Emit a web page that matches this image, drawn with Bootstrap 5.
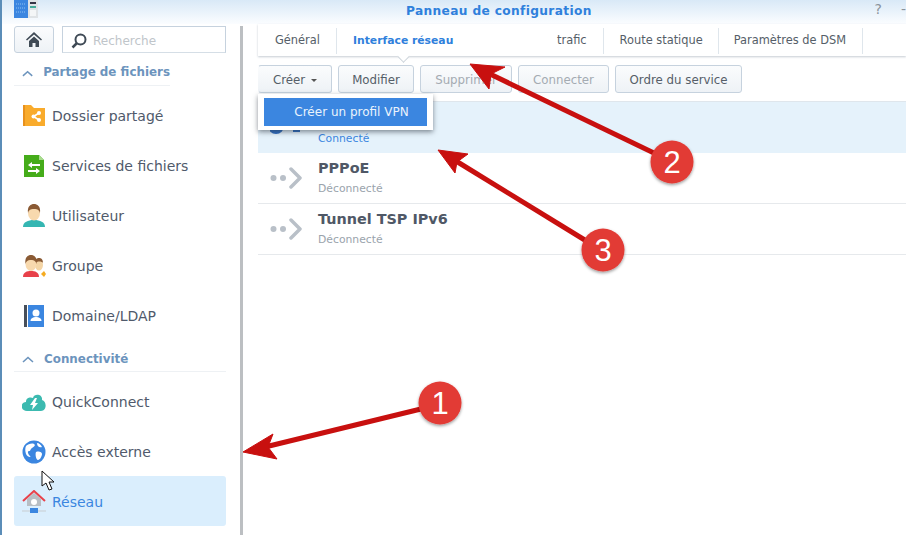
<!DOCTYPE html>
<html lang="fr">
<head>
  <meta charset="UTF-8" />
  <title>Panneau de configuration</title>
  <link href="https://cdn.jsdelivr.net/npm/bootstrap@5.3.3/dist/css/bootstrap.min.css" rel="stylesheet">
  <style>
    html,body { height:100%; overflow:hidden }
    body { background:#fff; color:#4a5568; font-family:"DejaVu Sans",Verdana,sans-serif; font-size:14px; position:relative; width:906px; height:535px; border-left:2px solid #5b8db8 }
    .titlebar { height:24px; background:linear-gradient(#d9e9f7,#fbfdff); position:relative; flex:none }
    .titletext { color:#2f80dc; font-weight:700; font-size:12.2px; letter-spacing:.35px; padding-left:404px; line-height:22px }
    .appico { position:absolute; left:12px; top:0 }
    .winbtns { position:absolute; right:0; top:0; color:#8a939c; font-size:14px; line-height:18px; gap:19px }
    .shell { height:511px }
    .sidebar { width:241px; flex:none; padding:2px 17px 0 12px; position:relative }
    .scrolltrack { position:absolute; right:0; top:2px; bottom:0; width:3px; background:#bcbfc2 }
    .homebtn { width:40px; height:27px; border:1px solid #c6d2de; border-radius:3px; background:linear-gradient(#fbfcfd,#eef2f6) }
    .searchbox { width:164px; height:27px; border:1px solid #c6d2de; border-bottom-color:#d5dee6; margin-left:8px; color:#c0c5ca; font-size:12px; gap:6px; padding:3px 0 0 8px }
    .sechead { color:#6c94bd; font-weight:700; font-size:11.9px; height:31px; gap:10px; padding:7px 0 0 8px; border-bottom:1px solid #eef1f4; margin-bottom:5px; white-space:nowrap }
    .sechead.first { width:156px; height:33px; padding-top:8px }
    .navitem { height:50px; gap:6px; font-size:14px; color:#505a6b; padding-left:8px; border-radius:3px }
    .navitem.tighter { height:49px; padding-top:1px }
    .navitem.current { background:#daeefd; color:#3b86e0; padding-top:2px }
    .navico { width:24px; height:24px; flex:none }
    .mainpane { flex:1; min-width:0; padding-left:15px }
    .tabstrip { height:32px; padding-top:2px; background:#fff; box-shadow:0 1px 2px rgba(90,110,130,.35); font-size:11.4px; color:#555e68; position:relative }
    .tabcell { height:26px; padding:0 16px; border-right:1px solid #dfe6ec; display:flex; align-items:center }
    .tabcell.tabfirst { width:79px; padding-left:17px; padding-right:0 }
    .tabcell.active { color:#2f80dc; font-weight:700; font-size:10.8px; border-right:0; width:220px }
    .tabcell.route { padding-right:15px }
    .tabcell.dsm { padding-left:15px }
    .notch { position:absolute; left:141px; top:28px; width:9px; height:9px; background:#fff; transform:rotate(45deg); border-right:1px solid #ccd3da; border-bottom:1px solid #ccd3da }
    .toolrow { height:46px; padding-top:9px; gap:6px; border-bottom:1px solid #dfe6ec }
    .toolbtn { height:28px; border:1px solid #c6d2de; border-radius:3px; background:linear-gradient(#fbfcfd,#eef2f6); font-size:11.8px; color:#555e68; padding:3px 0 0; display:flex; align-items:center; justify-content:center }
    .toolbtn.off { color:#a4abb2 }
    .b-create { width:74px; border-left-color:transparent }
    .b-edit { width:76px }
    .b-del { width:92px }
    .b-link { width:91px }
    .b-order { width:127px }
    .caretmini { display:inline-block; border-top:3px solid #555; border-left:3px solid transparent; border-right:3px solid transparent; margin-left:6px }
    .netrow { height:51px; border-bottom:1px solid #e6e9ec; padding-left:12px; gap:16px }
    .netrow.picked { background:#e5f2fb; border-bottom:0 }
    .netname { font-weight:700; font-size:14.4px; color:#4f5866; line-height:17px }
    .netstate { font-size:10.8px; color:#9aa3ac; line-height:14px; margin-top:5px }
    .netstate.on { color:#3b86e0 }
    .vpnmenu { position:absolute; left:256px; top:94px; width:175px; height:36px; background:#fff; box-shadow:0 2px 5px rgba(40,50,60,.55); padding:4px 6px; z-index:3 }
    .vpnitem { height:28px; background:#3b86e0; color:#eaf3fc; font-size:12px; display:flex; align-items:center; justify-content:center; padding-left:12px }
    .overlayart { position:absolute; left:-2px; top:0; z-index:5; pointer-events:none }
    .numtxt { font-family:"Liberation Sans",Arial,sans-serif; font-size:31px; fill:#fff; text-anchor:middle }
  </style>
</head>
<body>
<div class="titlebar">
  <svg class="appico" width="24" height="19" viewBox="0 0 24 19"><rect x="0" y="0" width="14" height="18" fill="#3b86e0"/><rect x="14" y="0" width="10" height="18" fill="#dfe3e6"/><rect x="16" y="2" width="6" height="2" fill="#334"/><rect x="16" y="6" width="6" height="2" fill="#4a9"/><rect x="16" y="10" width="6" height="6" fill="#f4f6f7"/><path d="M2 4h10M2 8h10M2 12h10" stroke="#8fc0f2" stroke-dasharray="1 1"/></svg>
  <div class="titletext">Panneau de configuration</div>
  <div class="winbtns d-flex"><span>?</span><span>-</span></div>
</div>
<div class="shell d-flex">
  <aside class="sidebar">
    <div class="scrolltrack"></div>
    <div class="d-flex">
      <div class="homebtn d-flex align-items-center justify-content-center">
        <svg width="16" height="15" viewBox="0 0 16 15"><path d="M8 0 0 7.500l1 1L8 2.400l7 6.100 1-1z" fill="#3f4a55"/><path d="M3 9 8 4.500 13 9v6H9.500v-4h-3v4H3z" fill="#3f4a55"/></svg>
      </div>
      <div class="searchbox d-flex align-items-center">
        <svg width="16" height="16" viewBox="0 0 16 16"><circle cx="9.500" cy="6.500" r="5" fill="none" stroke="#3f4a55" stroke-width="2"/><path d="M6 10 1.500 14.500" stroke="#3f4a55" stroke-width="2.500"/></svg>
        <span>Recherche</span>
      </div>
    </div>
    <div class="sechead first d-flex align-items-center">
      <svg width="12" height="7" viewBox="0 0 12 7"><path d="M1 6 6 1.500 11 6" fill="none" stroke="#6c94bd" stroke-width="1.600"/></svg>
      <span>Partage de fichiers</span>
    </div>
    <div class="navitem d-flex align-items-center">
      <svg class="navico" viewBox="0 0 24 24"><path d="M1 1h8l3 3h11v18H1z" fill="#f9ab2c"/><rect x="1" y="1" width="2" height="21" fill="#e8911c"/><path d="M17 9 11.500 12.500 17 16" fill="none" stroke="#fff" stroke-width="1.500"/><circle cx="17" cy="9" r="2" fill="#fff"/><circle cx="11.500" cy="12.500" r="2" fill="#fff"/><circle cx="17" cy="16" r="2" fill="#fff"/></svg>
      <span>Dossier partagé</span>
    </div>
    <div class="navitem d-flex align-items-center">
      <svg class="navico" viewBox="0 0 24 24"><path d="M2 1h15l5 5v17H2z" fill="#45ac1a"/><path d="M17 1v5h5z" fill="#a9dc8f"/><path d="M6 11l4-3v2h8v2h-8v2zM18 17l-4-3v2H6v2h8v2z" fill="#fff"/></svg>
      <span>Services de fichiers</span>
    </div>
    <div class="navitem d-flex align-items-center">
      <svg class="navico" viewBox="0 0 24 24"><path d="M1 23c0-5 5-7 11-7s11 2 11 7z" fill="#35b6b2"/><ellipse cx="12" cy="9" rx="6" ry="7.500" fill="#f8d9ae"/><path d="M6 9C5 2 9 0 12 0s7 2 6 9c-1-3-2-4-6-4S7 6 6 9z" fill="#8a5a34"/></svg>
      <span>Utilisateur</span>
    </div>
    <div class="navitem d-flex align-items-center">
      <svg class="navico" viewBox="0 0 24 24"><ellipse cx="17" cy="11" rx="4" ry="5.500" fill="#f4d5a6"/><path d="M13 9c0-4 2-5 4-5s4 1 4 5c-1-2-6-2-8 0z" fill="#8a5a34"/><path d="M19 20l3-3 2 3-2 3z" fill="#f5ab20"/><path d="M1 23c0-5 4-6 8-6s8 1 8 6z" fill="#e8414a"/><ellipse cx="9" cy="10" rx="5.500" ry="7" fill="#f8d9ae"/><path d="M3.500 10C2.500 3 6 1 9 1s6.500 2 5.500 9c-1-3-2-4-5.500-4S4.500 7 3.500 10z" fill="#8a5a34"/></svg>
      <span>Groupe</span>
    </div>
    <div class="navitem d-flex align-items-center">
      <svg class="navico" viewBox="0 0 24 24"><rect x="2" y="1" width="3" height="22" fill="#474f5a"/><rect x="6" y="1" width="16" height="22" fill="#3b86e0"/><circle cx="14" cy="9" r="3.500" fill="#fff"/><path d="M8.500 17c0-3 3-4 5.500-4s5.500 1 5.500 4z" fill="#fff"/></svg>
      <span>Domaine/LDAP</span>
    </div>
    <div class="sechead d-flex align-items-center">
      <svg width="12" height="7" viewBox="0 0 12 7"><path d="M1 6 6 1.500 11 6" fill="none" stroke="#6c94bd" stroke-width="1.600"/></svg>
      <span>Connectivité</span>
    </div>
    <div class="navitem d-flex align-items-center">
      <svg class="navico" viewBox="0 0 24 24"><path d="M5 21c-7 0-7-9-1-9 0-5 5-5 7-4 1-5 10-4 9 2 5 1 5 11-1 11z" fill="#3cbab0"/><path d="M13 8l-5 7h3l-1 5 6-7h-3l2-5z" fill="#fff"/></svg>
      <span>QuickConnect</span>
    </div>
    <div class="navitem tighter d-flex align-items-center">
      <svg class="navico" viewBox="0 0 24 24"><circle cx="12" cy="12" r="11.500" fill="#3b86e0"/><path d="M4 6c2-2 6-3 8-2s0 3-2 4-1 3-3 3-1 3 1 5-3 1-4-2-1-6 0-8zM14 12c3-1 6 0 6 2s-2 6-4 6-3-6-2-8zM15 3c2 0 4 2 5 4-2 1-5 0-5-4z" fill="#fff"/></svg>
      <span>Accès externe</span>
    </div>
    <div class="navitem current d-flex align-items-center">
      <svg class="navico" viewBox="0 0 24 24"><path d="M5 14V9l7-6 7 6v7H5z" fill="#b8bec4"/><path d="M1 11 12 1l11 10" fill="none" stroke="#e8414a" stroke-width="2"/><circle cx="12" cy="12" r="3" fill="#fff"/><path d="M0 21h24" stroke="#c8cdd1"/><rect x="8" y="18" width="8" height="5" fill="#3b86e0"/></svg>
      <span>Réseau</span>
    </div>
  </aside>
  <main class="mainpane">
    <div class="tabstrip d-flex align-items-center">
      <div class="tabcell tabfirst">Général</div>
      <div class="tabcell active">Interface réseau</div>
      <div class="notch"></div>
      <div class="tabcell ps-0">trafic</div>
      <div class="tabcell route">Route statique</div>
      <div class="tabcell dsm">Paramètres de DSM</div>
    </div>
    <div class="toolrow d-flex">
      <button class="toolbtn b-create">Créer<span class="caretmini"></span></button>
      <button class="toolbtn b-edit">Modifier</button>
      <button class="toolbtn off b-del">Supprimer</button>
      <button class="toolbtn off b-link">Connecter</button>
      <button class="toolbtn b-order">Ordre du service</button>
    </div>
    <div class="netrow picked d-flex align-items-center">
      <svg width="32" height="24" viewBox="0 0 32 24"><circle cx="6" cy="10" r="8" fill="#2f6fc4"/><rect x="23" y="11" width="7" height="5" fill="#2f6fc4"/></svg>
      <div><div class="netname">&nbsp;</div><div class="netstate on">Connecté</div></div>
    </div>
    <div class="netrow d-flex align-items-center">
      <svg width="32" height="24" viewBox="0 0 32 24"><circle cx="3.500" cy="12" r="3" fill="#b9c0c8"/><circle cx="13" cy="12" r="3" fill="#b9c0c8"/><path d="M21 3l9 9-9 9" fill="none" stroke="#b9c0c8" stroke-width="3.500" stroke-linecap="round" stroke-linejoin="round"/></svg>
      <div><div class="netname">PPPoE</div><div class="netstate">Déconnecté</div></div>
    </div>
    <div class="netrow d-flex align-items-center">
      <svg width="32" height="24" viewBox="0 0 32 24"><circle cx="3.500" cy="12" r="3" fill="#b9c0c8"/><circle cx="13" cy="12" r="3" fill="#b9c0c8"/><path d="M21 3l9 9-9 9" fill="none" stroke="#b9c0c8" stroke-width="3.500" stroke-linecap="round" stroke-linejoin="round"/></svg>
      <div><div class="netname">Tunnel TSP IPv6</div><div class="netstate">Déconnecté</div></div>
    </div>
  </main>
</div>

<div class="vpnmenu"><div class="vpnitem">Créer un profil VPN</div></div>

<svg class="overlayart" width="906" height="535" viewBox="0 0 906 535">
  <defs><filter id="dropsoft" x="-30%" y="-30%" width="160%" height="160%"><feDropShadow dx="0" dy="1.500" stdDeviation="1.500" flood-color="#000" flood-opacity=".4"/></filter></defs>
  <g fill="#c8100f" stroke="#c8100f">
    <path d="M425 408 265 447" stroke-width="5"/>
    <path d="M243 452 273 434 268 447 277 459z"/>
    <path d="M656 154 490 74" stroke-width="5"/>
    <path d="M470 64 505 67 491 74 489 89z"/>
    <path d="M588 242 456 161" stroke-width="5"/>
    <path d="M438 150 468 154 457 162 455 173z"/>
  </g>
  <g filter="url(#dropsoft)"><circle cx="440" cy="403" r="21.500" fill="#e23a36"/><circle cx="672" cy="162" r="21.500" fill="#e23a36"/><circle cx="603" cy="250" r="21.500" fill="#e23a36"/></g>
  <text class="numtxt" x="440" y="414">1</text>
  <text class="numtxt" x="672" y="173">2</text>
  <text class="numtxt" x="603" y="261">3</text>
  <path d="M42 471v15l4-3 3 7 3-1-3-7h5z" fill="#fff" stroke="#111" stroke-width="1"/>
</svg>

<script src="https://cdn.jsdelivr.net/npm/bootstrap@5.3.3/dist/js/bootstrap.bundle.min.js"></script>
</body>
</html>
